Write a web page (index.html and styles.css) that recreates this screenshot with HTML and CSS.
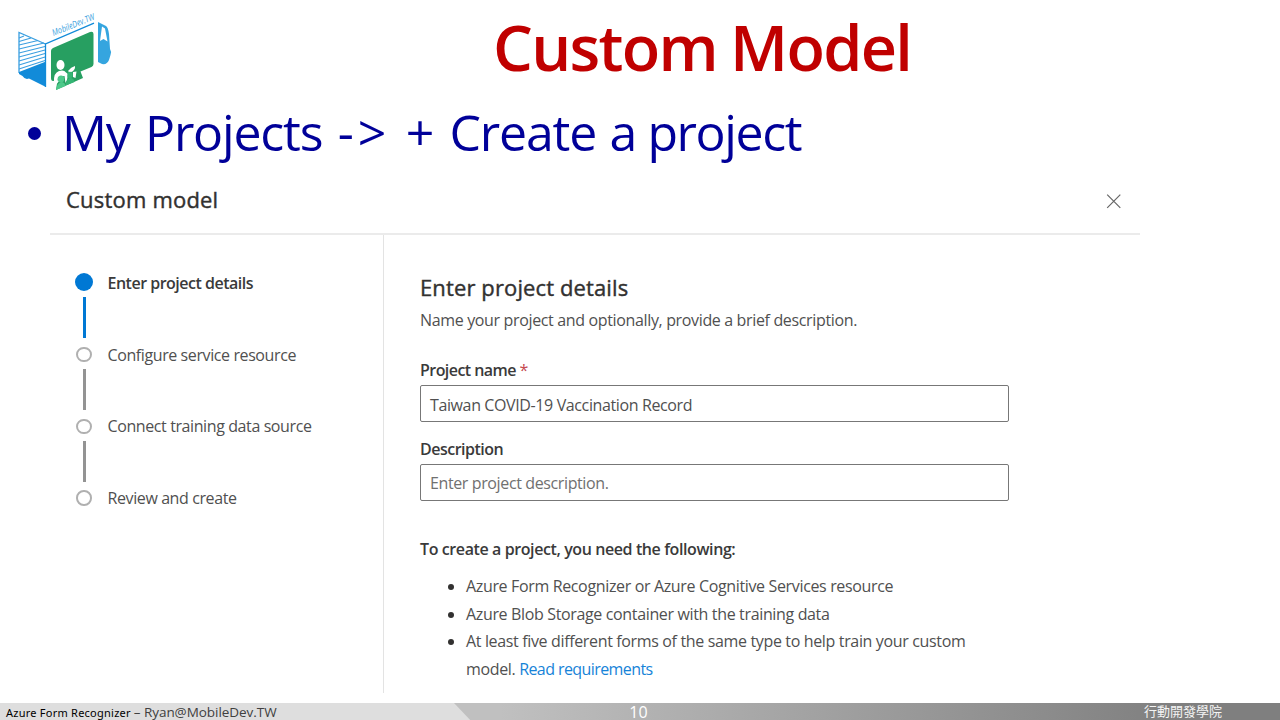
FILE: index.html
```html
<!DOCTYPE html>
<html lang="en">
<head>
<meta charset="utf-8">
<title>Custom Model</title>
<link rel="stylesheet" href="styles.css">
</head>
<body>
<div class="slide">
  <header class="top">
    <svg class="logo" width="100" height="84" viewBox="15 9 100 84">
      <g stroke="#3a9fe0" stroke-width="1.100" fill="none">
        <path d="M19 38L24 36M19 41.500L31 38M19 45L38 40.500M19 49L44 43M19 53L45 46.500M19 57L45 50M19 61L45 53.500M19 65L45 57M19 69L45 60.500"/>
        <path d="M19 73V32.500L45.500 44" stroke-width="1.300"/>
      </g>
      <path d="M19 72L46 61.500V87L29 78.500Q25 80 22.500 76L19 74Z" fill="#128bd9"/>
      <path d="M45.500 87V44L94 23.200" fill="none" stroke="#128bd9" stroke-width="1.300"/>
      <path d="M51 51Q51 49 53 48L90 32Q93.500 31 93.500 34V64Q93.500 66 91.500 67L80.500 71.500L83 78L74 82L65 86L56 90L57 83.500L60 80L53 81Q51 81 51 78Z" fill="#279f61"/>
      <g fill="#fff">
        <ellipse cx="60.500" cy="65" rx="4" ry="5"/>
        <path d="M54 81.500Q53.500 73 59 71Q64 69.500 66 72.500L68 74L67 80L65.500 83L64.500 76L58 77L57 84Z"/>
        <path d="M68 71Q71 67 75 66Q75.500 69 72.500 71.500Q69 73 68 71ZM73 72L76.500 71.500L75.500 78L73 77Z"/>
      </g>
      <g fill="#4dc98a">
        <ellipse cx="61" cy="79" rx="3.200" ry="3.500"/>
        <path d="M56 90Q57 83 61 82Q65 82 65.500 86Z"/>
      </g>
      <g fill="#35b574">
        <ellipse cx="70" cy="75" rx="2.700" ry="3.300"/>
        <path d="M65.500 85.500Q66 79 70 78Q74 78 74.500 82Z"/>
      </g>
      <path d="M98 22L106 26Q108 27 109 34L110 49Q112 52 110.500 55L109 60Q107 65 102 64L98 62Z" fill="#35a5df"/>
      <path d="M102 26.500L105 28.500L107.500 41.500L103.500 39L100 41Z" fill="#fff"/>
      <text class="logo-text" transform="translate(53.500 36) rotate(-22)" textLength="45" lengthAdjust="spacingAndGlyphs">MobileDev.TW</text>
    </svg>
    <h1 class="title">Custom Model</h1>
  </header>
  <div class="point"><span class="dot"></span><span class="point-text">My Projects <span class="arrow">-&gt;</span> <span class="plus">+</span> Create <span class="tail">a project</span></span></div>
  <main class="panel">
    <div class="panel-head">
      <h2 class="panel-title">Custom model</h2>
      <svg class="close" width="16" height="16" viewBox="0 0 16 16"><path d="M1.200 1.700L14.300 14.800M14.300 1.700L1.200 14.800"/></svg>
    </div>
    <div class="panel-body">
      <ol class="steps">
        <li class="step active"><span class="mark"></span><span>Enter project details</span></li>
        <li class="step"><span class="mark"></span><span>Configure service resource</span></li>
        <li class="step"><span class="mark"></span><span>Connect training data source</span></li>
        <li class="step"><span class="mark"></span><span>Review and create</span></li>
      </ol>
      <section class="form">
        <h3 class="form-title">Enter project details</h3>
        <p class="intro">Name your project and optionally, provide a brief description.</p>
        <div class="label">Project name <span class="required">*</span></div>
        <div class="field">Taiwan COVID-19 Vaccination Record</div>
        <div class="label second">Description</div>
        <div class="field hint">Enter project description.</div>
        <p class="needs">To create a project, you need the following:</p>
        <ul class="list">
          <li>Azure Form Recognizer or Azure Cognitive Services resource</li>
          <li>Azure Blob Storage container with the training data</li>
          <li>At least five different forms of the same type to help train your custom<br>model. <a class="link">Read requirements</a></li>
        </ul>
      </section>
    </div>
  </main>
  <footer class="footer">
    <div class="foot-left"><span class="product">Azure Form Recognizer</span><span class="mail">– Ryan@MobileDev.TW</span></div>
    <div class="page">10</div>
    <div class="school">行動開發學院</div>
  </footer>
</div>
</body>
</html>
```
FILE: styles.css
```css
*, *::before, *::after { box-sizing: border-box; }
body { margin: 0; background: #fff; font-family: "Open Sans", "Noto Sans", sans-serif; }
h1, h2, h3, p, ul, ol { margin: 0; padding: 0; font-weight: 400; }
.slide { width: 1280px; height: 720px; overflow: hidden; display: flex; flex-direction: column; }
.top { height: 100px; display: flex; align-items: flex-start; padding: 9px 0 0 15px; }
.logo { flex: none; overflow: visible; }
.logo-text { font-size: 9px; font-style: italic; fill: #3a9fe0; }
.title { margin-left: 378px; line-height: 76px; font-size: 63px; font-weight: 600; color: #c00000; letter-spacing: -1.7px; word-spacing: -1.5px; white-space: nowrap; }
.point { height: 80px; display: flex; align-items: flex-start; padding-left: 28px; color: #000099; }
.dot { width: 13px; height: 13px; border-radius: 50%; background: #000099; margin: 27px 21px 0 0; }
.point-text { font-size: 50px; line-height: 64px; letter-spacing: -1.2px; word-spacing: 3.6px; white-space: nowrap; }
.arrow { letter-spacing: 4px; }
.plus { padding: 0 1px 0 0; }
.tail { letter-spacing: -1.4px; word-spacing: 0; margin-left: -2px; }
.panel { width: 1090px; height: 513px; margin-left: 50px; color: #505050; font-size: 16px; }
.panel-head { height: 55px; border-bottom: 2px solid #ebebeb; display: flex; justify-content: space-between; padding: 0 18px 0 16px; }
.panel-title { font-size: 22px; line-height: 38px; letter-spacing: 0.2px; color: #323130; -webkit-text-stroke: 0.4px #323130; }
.close { margin-top: 13px; fill: none; stroke: #666; stroke-width: 1.2; }
.panel-body { display: flex; height: 458px; }
.steps { width: 334px; border-right: 1px solid #e3e3e3; list-style: none; padding: 36px 0 0 25px; }
.step { height: 71.7px; display: flex; gap: 14.5px; line-height: 24px; white-space: nowrap; letter-spacing: -0.4px; }
.mark { width: 18px; display: flex; flex-direction: column; align-items: center; gap: 6.5px; padding-top: 4.3px; }
.mark::before { content: ""; width: 15.5px; height: 15.5px; flex: none; border: 2px solid #b0b0b0; border-radius: 50%; }
.mark::after { content: ""; width: 3px; height: 41px; background: #939393; }
.step:last-child .mark::after { display: none; }
.active .mark { padding-top: 2px; gap: 6px; }
.active .mark::before { width: 18px; height: 18px; border: 0; background: #0078d4; }
.active .mark::after { background: #0078d4; }
.active { font-weight: 600; color: #3a3a3a; letter-spacing: -0.5px; }
.form { width: 625px; padding: 34px 0 0 36px; white-space: nowrap; }
.form-title { font-size: 22px; line-height: 36px; letter-spacing: 0.12px; color: #323130; -webkit-text-stroke: 0.4px #323130; }
.intro { line-height: 30px; letter-spacing: -0.35px; }
.label { margin-top: 23px; line-height: 24px; padding-bottom: 3px; font-weight: 600; color: #3a3a3a; letter-spacing: -0.55px; }
.required { color: #c4494f; font-weight: 400; }
.field { height: 37px; border: 1px solid #777; border-radius: 2px; line-height: 38px; padding-left: 9px; letter-spacing: -0.38px; }
.label.second { margin-top: 15px; letter-spacing: -0.5px; }
.hint { color: #707070; line-height: 36px; }
.needs { margin-top: 35px; line-height: 26px; font-weight: 600; color: #3a3a3a; letter-spacing: -0.4px; }
.list { padding-left: 46px; margin-top: 11px; line-height: 27.5px; letter-spacing: -0.35px; }
.list li::marker { color: #323130; }
.link { color: #1683d8; letter-spacing: -0.58px; }
.footer { height: 17px; margin-top: auto; display: grid; grid-template-columns: 473px 331px 1fr; background: linear-gradient(90deg, #c0c0c0 0, #c0c0c0 500px, #7f7f7f 1180px); line-height: 17px; white-space: nowrap; }
.foot-left { background: #dedede; clip-path: polygon(0 0, 454px 0, 473px 100%, 0 100%); display: flex; gap: 3px; padding-left: 6px; }
.product { font-family: "Noto Sans", sans-serif; font-size: 11px; line-height: 20px; letter-spacing: 0.24px; color: #000; }
.mail { font-size: 13.5px; line-height: 18px; letter-spacing: -0.05px; color: #404040; }
.page { text-align: center; font-size: 16px; line-height: 19px; color: #fff; }
.school { font-family: "Noto Sans CJK TC", sans-serif; font-size: 13px; font-weight: 400; line-height: 15px; color: #f4f4f4; padding-left: 340px; }
```
